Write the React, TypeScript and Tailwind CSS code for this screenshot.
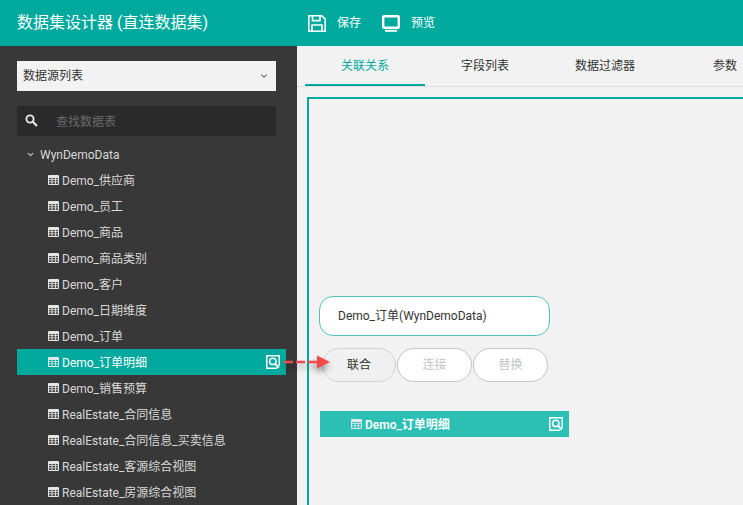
import { ChevronDown } from "lucide-react"

const tables = [
  "Demo_供应商",
  "Demo_员工",
  "Demo_商品",
  "Demo_商品类别",
  "Demo_客户",
  "Demo_日期维度",
  "Demo_订单",
  "Demo_订单明细",
  "Demo_销售预算",
  "RealEstate_合同信息",
  "RealEstate_合同信息_买卖信息",
  "RealEstate_客源综合视图",
  "RealEstate_房源综合视图",
]

const tabs = [
  { label: "关联关系", active: true },
  { label: "字段列表" },
  { label: "数据过滤器" },
  { label: "参数" },
]

const TableIcon = ({ bg }: { bg: string }) => (
  <svg viewBox="0 0 11 10" width="11" height="10" className="shrink-0">
    <rect width="11" height="10" rx="1" fill="#e6e6e6" />
    <path d="M1 3h2.6v1.3H1zM4.4 3h2.6v1.3H4.4zM7.8 3H10v1.3H7.8zM1 5.1h2.6v1.3H1zM4.4 5.1h2.6v1.3H4.4zM7.8 5.1H10v1.3H7.8zM1 7.2h2.6V9H1zM4.4 7.2h2.6V9H4.4zM7.8 7.2H10V9H7.8z" fill={bg} />
  </svg>
)

const PreviewIcon = () => (
  <svg viewBox="0 0 14 14" width="14" height="14" fill="none" stroke="#fff">
    <path d="M11 13.2H.8V.8h12.4V11" strokeWidth="1.5" />
    <circle cx="6.8" cy="6.4" r="3.2" strokeWidth="1.5" />
    <path d="M9.2 8.8l3.6 4" strokeWidth="1.8" />
  </svg>
)

const App = () => {
  return (
    <div className="flex h-[505px] w-[743px] flex-col overflow-hidden bg-[#f2f2f2] font-['Roboto','Noto_Sans_CJK_SC',sans-serif]">
      <header className="flex h-[46px] shrink-0 items-center bg-[#00a99d] text-white">
        <h1 className="w-[308px] pl-[17px] text-[16px] leading-none">数据集设计器 (直连数据集)</h1>
        <div className="flex items-center gap-[11px]">
          <svg viewBox="0 0 18 17" width="18" height="17" fill="none" stroke="#fff" strokeWidth="1.6">
            <path d="M.8.8h13l3.4 3.4v12H.8z" />
            <path d="M4.5 1v4.6h7.5V1M4 16v-6h10v6" />
          </svg>
          <span className="text-[12px]">保存</span>
        </div>
        <div className="ml-[21px] flex items-center gap-[11px]">
          <svg viewBox="0 0 18 17" width="18" height="17" fill="none" stroke="#fff">
            <rect x="1.2" y="1.2" width="15.6" height="11.6" rx="1" strokeWidth="2.4" />
            <path d="M3 15.8h12" strokeWidth="2" />
          </svg>
          <span className="text-[12px]">预览</span>
        </div>
      </header>

      <div className="flex min-h-0 flex-1">
        <aside className="w-[297px] shrink-0 overflow-hidden bg-[#383838] pt-[15px]">
          <div className="ml-[17px] flex h-[30px] w-[259px] items-center justify-between bg-[#f2f2f2] pl-[6px] pr-[7px] text-[12px] text-[#333]">
            <span>数据源列表</span>
            <ChevronDown size={10} strokeWidth={2.5} className="text-[#555]" />
          </div>
          <div className="ml-[17px] mt-[15px] flex h-[30px] w-[259px] items-center bg-[#2a2a2a] pl-[8px] text-[12px] text-[#6b6b6b]">
            <svg viewBox="0 0 13 13" width="13" height="13" fill="none" stroke="#e8e8e8" className="mt-[-1px] shrink-0">
              <circle cx="5" cy="5" r="3.6" strokeWidth="1.9" />
              <path d="M7.8 7.8l4.2 4.2" strokeWidth="2.2" />
            </svg>
            <span className="ml-[18px] mt-[2px]">查找数据表</span>
          </div>
          <div className="mt-[5px] flex h-[26px] items-center pl-[26px] text-[12px] text-[#d8d8d8]">
            <ChevronDown size={9} strokeWidth={3} className="text-[#ccc]" />
            <span className="ml-[5px] mt-[2px]">WynDemoData</span>
          </div>
          <ul>
            {tables.map((name) => {
              const selected = name === "Demo_订单明细"
              return (
                <li
                  key={name}
                  className={
                    selected
                      ? "ml-[17px] flex h-[26px] w-[269px] items-center bg-[#00a99d] pl-[31px] pr-[6px] text-[12px] text-white"
                      : "ml-[17px] flex h-[26px] w-[269px] items-center pl-[31px] text-[12px] text-[#d8d8d8]"
                  }
                >
                  <TableIcon bg={selected ? "#00a99d" : "#4a4a4a"} />
                  <span className="ml-[3px] mt-[1px]">{name}</span>
                  {selected && (
                    <span className="ml-auto">
                      <PreviewIcon />
                    </span>
                  )}
                </li>
              )
            })}
          </ul>
        </aside>

        <main className="min-w-0 flex-1 overflow-hidden">
          <nav className="flex h-[41px] border-b border-[#dcdcdc] pl-[8px]">
            {tabs.map((tab) => (
              <div
                key={tab.label}
                className={
                  tab.active
                    ? "flex h-[40px] w-[120px] shrink-0 items-center justify-center border-b-2 border-[#00a99d] pt-[2px] text-[12px] text-[#00a99d]"
                    : "flex h-[40px] w-[120px] shrink-0 items-center justify-center pb-[2px] pt-[2px] text-[12px] text-[#333]"
                }
              >
                {tab.label}
              </div>
            ))}
          </nav>
          <section className="ml-[10px] mt-[10px] h-[500px] w-[600px] border-2 border-[#00a99d] pl-[10px] pt-[197px]">
            <div className="flex h-[40px] w-[231px] items-center rounded-[14px] border border-[#4fc3ba] bg-white pl-[18px] text-[12px] text-[#333]">
              Demo_订单(WynDemoData)
            </div>
            <div className="ml-[3px] mt-[12px] flex gap-px">
              <button className="h-[34px] w-[74px] rounded-[17px] border border-[#d2d2d2] bg-[#f0f0f0] text-[12px] text-[#333]">
                联合
              </button>
              <button className="h-[34px] w-[75px] rounded-[17px] border border-[#c4c4c4] bg-white text-[12px] text-[#c4c4c4]">
                连接
              </button>
              <button className="h-[34px] w-[75px] rounded-[17px] border border-[#c4c4c4] bg-white text-[12px] text-[#c4c4c4]">
                替换
              </button>
            </div>
            <div className="ml-px mt-[29px] flex h-[26px] w-[249px] items-center bg-[#2cc0b5] pl-[31px] pr-[6px] text-[12px] font-semibold text-white">
              <TableIcon bg="#2cc0b5" />
              <span className="ml-[3px] mt-[2px]">Demo_订单明细</span>
              <span className="ml-auto">
                <PreviewIcon />
              </span>
            </div>
          </section>
        </main>
      </div>

      <svg
        className="pointer-events-none absolute left-[280px] top-[350px] drop-shadow-[0_4px_3px_rgba(0,0,0,0.4)]"
        width="56"
        height="24"
        viewBox="0 0 56 24"
      >
        <path d="M4 12h9M16 12h9M28 12h9" stroke="#f54848" strokeWidth="2.6" />
        <path d="M37 5.5l13 6.5-13 6.5z" fill="#f54848" />
      </svg>
    </div>
  )
}

export default App
